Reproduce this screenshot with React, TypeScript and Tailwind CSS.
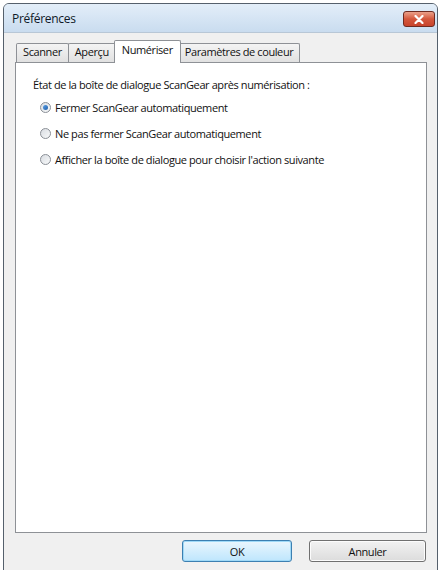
import React from "react";

function Radio({ checked }: { checked?: boolean }) {
  return (
    <span className="relative inline-flex w-[11px] h-[11px] rounded-full border border-[#8a8f96] bg-gradient-to-br from-[#d9dde2] to-[#f8f9fa] items-center justify-center shrink-0">
      {checked && (
        <span className="w-[5px] h-[5px] rounded-full bg-gradient-to-br from-[#5aa0e6] to-[#1f5ea8]" />
      )}
    </span>
  );
}

function Tab({ label, selected }: { label: string; selected?: boolean }) {
  if (selected) {
    return (
      <div className="relative z-10 -mx-[2px] -mb-[1px] h-[23px] px-[7px] pt-[3px] bg-white border border-b-0 border-[#8e9196] rounded-t-[2px] text-[#111]">
        {label}
      </div>
    );
  }
  return (
    <div className="mt-[3px] h-[19px] px-[6px] pt-[2px] bg-gradient-to-b from-[#f4f4f4] to-[#e1e1e1] border border-b-0 border-[#8e9196] -ml-[1px] first:ml-0 rounded-t-[2px] text-[#111]">
      {label}
    </div>
  );
}

export default function App() {
  return (
    <div
      className="w-[440px] h-[570px] bg-white overflow-hidden text-[11px] leading-none tracking-[-0.4px]"
      style={{ fontFamily: '"Open Sans", "Noto Sans", sans-serif' }}
    >
      <div className="ml-[3px] mt-[3px] w-[435px] h-[580px] border border-[#55606c] rounded-t-[6px] bg-[#d6e4f2] flex flex-col">
        {/* Title bar */}
        <div className="h-[28px] flex items-start justify-between pl-[8px] pr-[2px] bg-gradient-to-b from-[#e3eef9] to-[#c9dcef] rounded-t-[5px]">
          <span className="mt-[9px] text-[12px] text-[#0f1a28] tracking-[-0.3px]">Préférences</span>
          <div className="mt-[7px] w-[32px] h-[16px] rounded-[3px] border border-[#6e2a20] bg-gradient-to-b from-[#eaa08a] via-[#d4573c] to-[#c8432b] flex items-center justify-center">
            <svg width="10" height="9" viewBox="0 0 10 9">
              <path d="M1.5 1 L8.5 8 M8.5 1 L1.5 8" stroke="#ffffff" strokeWidth="2.2" strokeLinecap="round" />
            </svg>
          </div>
        </div>
        {/* Client */}
        <div className="flex-1 bg-[#f0f0f0] pl-[11px] pr-[10px] pt-[6px] flex flex-col border-t border-[#b8c7d6]">
          <div className="flex items-end h-[23px] pl-[1px]">
            <Tab label="Scanner" />
            <Tab label="Aperçu" />
            <Tab label="Numériser" selected />
            <Tab label="Paramètres de couleur" />
          </div>
          <div className="h-[471px] bg-white border border-[#8e9196] pt-[16px] pl-[17px] text-[#111]">
            <div className="h-[12px]">État de la boîte de dialogue ScanGear après numérisation :</div>
            <div className="flex flex-col gap-[14px] mt-[10px] pl-[7px]">
              <label className="flex items-center gap-[4px] h-[12px]">
                <Radio checked />
                <span>Fermer ScanGear automatiquement</span>
              </label>
              <label className="flex items-center gap-[4px] h-[12px]">
                <Radio />
                <span>Ne pas fermer ScanGear automatiquement</span>
              </label>
              <label className="flex items-center gap-[4px] h-[12px]">
                <Radio />
                <span>Afficher la boîte de dialogue pour choisir l'action suivante</span>
              </label>
            </div>
          </div>
          <div className="flex justify-end gap-[17px] mt-[7px] pr-[1px]">
            <button className="w-[110px] h-[22px] rounded-[3px] border border-[#3c7fb1] bg-gradient-to-b from-[#eaf6fd] to-[#bee6fd] shadow-[inset_0_0_0_1px_#9fd9f7] text-[#111]">
              OK
            </button>
            <button className="w-[117px] h-[22px] rounded-[3px] border border-[#707070] bg-gradient-to-b from-[#f2f2f2] to-[#dcdcdc] shadow-[inset_0_0_0_1px_#fcfcfc] text-[#111]">
              Annuler
            </button>
          </div>
        </div>
      </div>
    </div>
  );
}
